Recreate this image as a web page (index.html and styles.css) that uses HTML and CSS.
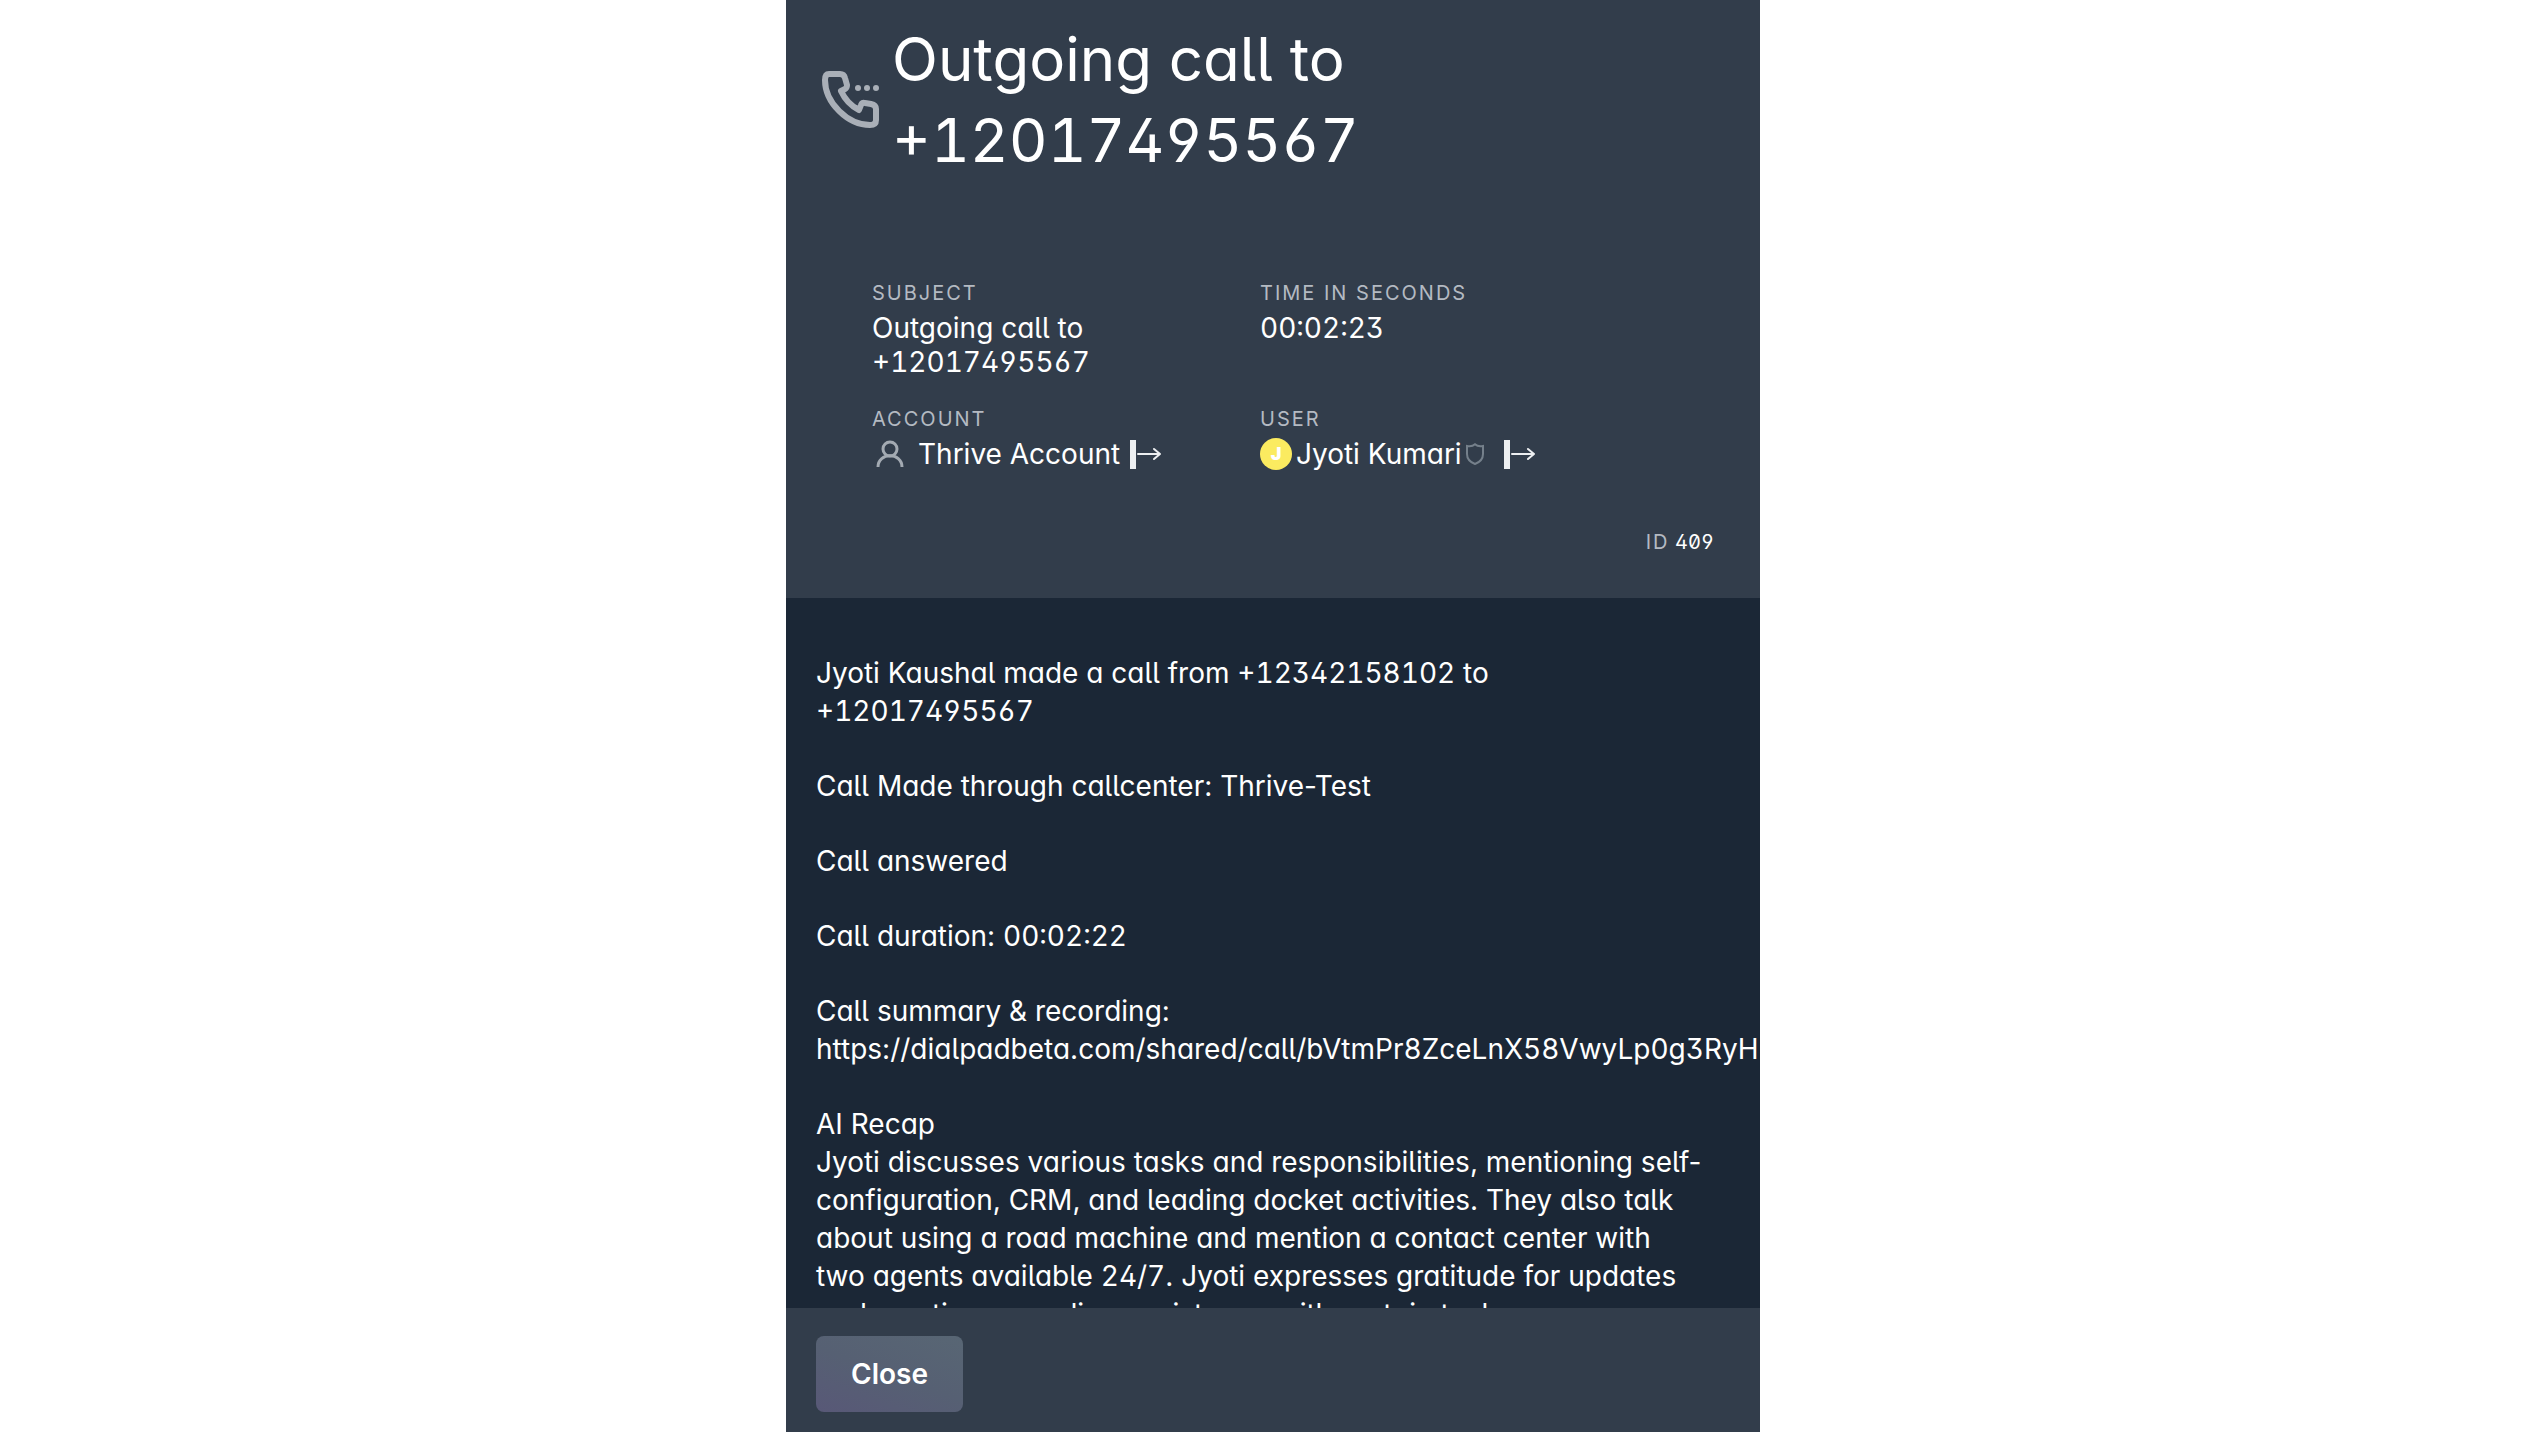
FILE: index.html
```html
<!DOCTYPE html>
<html lang="en">
<head>
<meta charset="utf-8">
<meta name="viewport" content="width=device-width, initial-scale=1">
<title>Outgoing call</title>
<link rel="stylesheet" href="styles.css">
</head>
<body>
<main class="panel">
  <header class="summary">
    <div class="title-row">
      <svg class="call-icon" viewBox="0 0 64 64" aria-hidden="true">
        <path d="M13 6h11q4 0 5 4l2 7q0 3-2 4l-4 2q6 13 18 19l2-5q1-3 4-2l6 1q5 1 5 5v11q0 5-6 5C32 57 9 35 9 12q0-6 4-6z" />
        <circle cx="42" cy="20" r="3" /><circle cx="51" cy="20" r="3" /><circle cx="60" cy="20" r="3" />
      </svg>
      <h1 class="title">Outgoing call to <span class="num">+12017495567</span></h1>
    </div>
    <dl class="fields">
      <div class="field">
        <dt class="label">Subject</dt>
        <dd class="value">Outgoing call to <span class="num">+12017495567</span></dd>
      </div>
      <div class="field">
        <dt class="label">Time in seconds</dt>
        <dd class="value"><span class="num">00:02:23</span></dd>
      </div>
      <div class="field">
        <dt class="label">Account</dt>
        <dd class="value value-row">
          <svg class="person-icon" viewBox="0 0 36 32" aria-hidden="true"><circle cx="18" cy="11" r="7" /><path d="M6 29c0-15 24-15 24 0" /></svg>
          <a class="link account-link" href="#">Thrive Account</a>
          <svg class="open-icon" viewBox="0 0 32 32" aria-hidden="true"><rect x="0" y="2" width="6" height="29" /><path d="M8 16h22m-6-5 6 5-6 5" /></svg>
        </dd>
      </div>
      <div class="field">
        <dt class="label">User</dt>
        <dd class="value value-row">
          <span class="avatar" aria-hidden="true">J</span>
          <a class="link user-link" href="#">Jyoti Kumari</a>
          <svg class="shield-icon" viewBox="0 0 18 22" aria-hidden="true"><path d="M9 1.300Q12 4 17 3v8q0 7-8 10-8-3-8-10V3q5 1 8-1.700z" /></svg>
          <svg class="open-icon" viewBox="0 0 32 32" aria-hidden="true"><rect x="0" y="2" width="6" height="29" /><path d="M8 16h22m-6-5 6 5-6 5" /></svg>
        </dd>
      </div>
    </dl>
    <p class="record"><span class="label">ID</span> <span class="record-id">409</span></p>
  </header>
  <section class="notes">
    <p>Jyoti Kaushal made a call from <span class="num">+12342158102</span> to<br><span class="num">+12017495567</span></p>
    <p>Call Made through callcenter: Thrive-Test</p>
    <p>Call answered</p>
    <p>Call duration: <span class="num">00:02:22</span></p>
    <p>Call summary &amp; recording: https://dialpadbeta.com/shared/call/<span class="num">bVtmPr8ZceLnX58VwyLp0g3RyH</span></p>
    <p>AI Recap<br>Jyoti discusses various tasks and responsibilities, mentioning self-configuration, CRM, and leading docket activities. They also talk about using a road machine and mention a contact center with two agents available <span class="num">24/7</span>. Jyoti expresses gratitude for updates and meeting regarding assistance with certain tasks.</p>
  </section>
  <footer class="actions">
    <button class="close-button" type="button">Close</button>
  </footer>
</main>
</body>
</html>
```
FILE: styles.css
```css
* { box-sizing: border-box; }

body {
  margin: 0;
  background: #fff;
  color: #fff;
  font: 28px/38px Inter, "Liberation Sans", sans-serif;
  font-feature-settings: "ss01", "cv05", "cv11";
}

.num { font-feature-settings: "ss01", "cv05", "cv11", "tnum"; }

.panel {
  display: flex;
  flex-direction: column;
  width: 100%;
  max-width: 974px;
  height: 100vh;
  margin: 0 auto;
  overflow: hidden;
  background: #1b2736;
}

.summary { background: #323d4b; padding: 19px 46px 36px 30px; }

.title-row { display: flex; align-items: center; gap: 12px; }

.call-icon {
  flex: none;
  width: 64px;
  height: 64px;
  fill: none;
  stroke: #a9afb7;
  stroke-width: 6;
  stroke-linejoin: round;
}
.call-icon circle { fill: #a9afb7; stroke: none; }

.title {
  margin: 0;
  max-width: 560px;
  font-size: 60px;
  font-weight: 400;
  line-height: 81px;
}

.fields {
  display: grid;
  grid-template-columns: 1fr 1fr;
  row-gap: 25px;
  margin: 97px 66px 0 56px;
}

.field { min-width: 0; padding-right: 90px; }

.label {
  color: #b4bac2;
  font-size: 20px;
  line-height: 30px;
  letter-spacing: 2px;
  text-transform: uppercase;
}

.value { margin: 3px 0 0; line-height: 34px; }
.value-row { display: flex; align-items: center; white-space: nowrap; }
.link { color: #fff; text-decoration: none; }
.account-link { margin: 0 10px; }
.user-link { margin: 0 4px; }

.person-icon { flex: none; width: 36px; height: 32px; fill: none; stroke: #a3aab2; stroke-width: 3; }
.open-icon { flex: none; width: 32px; height: 32px; fill: none; stroke: #edeff1; stroke-width: 2; stroke-linecap: round; stroke-linejoin: round; }
.open-icon rect { fill: #edeff1; stroke: none; }
.shield-icon { flex: none; width: 18px; height: 22px; margin-right: 20px; fill: none; stroke: #75808b; stroke-width: 2; }

.avatar {
  flex: none;
  width: 32px;
  height: 32px;
  border-radius: 50%;
  background: #fbeb60;
  font-size: 18px;
  font-weight: 900;
  line-height: 32px;
  text-align: center;
}

.record { margin: 51px 0 0; text-align: right; font-size: 20px; line-height: 40px; }
.record-id { font-feature-settings: "ss01", "zero", "tnum"; }

.notes {
  flex: 1;
  min-height: 0;
  overflow: hidden;
  padding: 56px 57px 0 30px;
}
.notes p { margin: 0 0 37px; }

.actions { flex: none; padding: 28px 30px 20px; background: #323d4b; }

.close-button {
  display: block;
  height: 76px;
  padding: 0 35px;
  border: 0;
  border-radius: 8px;
  background: linear-gradient(20deg, #585877, #566073 50%, #586674);
  color: #fff;
  font: 600 28px/38px Inter, "Liberation Sans", sans-serif;
}
```
